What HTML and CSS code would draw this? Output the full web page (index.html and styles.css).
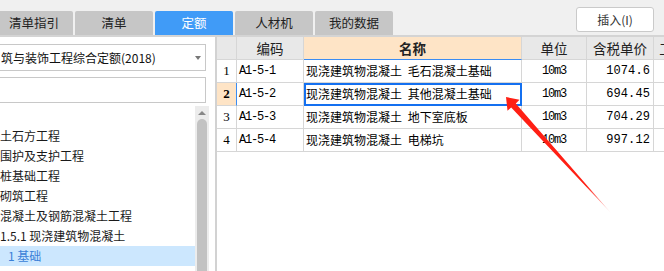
FILE: index.html
```html
<!DOCTYPE html>
<html lang="zh-CN">
<head>
<meta charset="UTF-8">
<title>定额</title>
<link rel="stylesheet" href="styles.css">
</head>
<body>

<div class="topbar">
  <div class="tabs">
    <div class="tab">清单指引</div>
    <div class="tab">清单</div>
    <div class="tab active">定额</div>
    <div class="tab">人材机</div>
    <div class="tab">我的数据</div>
  </div>
  <button class="insert">插入(I)</button>
</div>

<div class="main">
  <div class="side">
    <div class="select">筑与装饰工程综合定额(2018)<span class="caret"></span></div>
    <div class="search"></div>
    <div class="tree-wrap">
      <ul class="tree">
        <li>土石方工程</li>
        <li>围护及支护工程</li>
        <li>桩基础工程</li>
        <li>砌筑工程</li>
        <li>混凝土及钢筋混凝土工程</li>
        <li>1.5.1 现浇建筑物混凝土</li>
        <li class="sub selected">1 基础</li>
      </ul>
      <div class="scrollbar">
        <div class="sb-up"></div>
        <div class="sb-thumb"></div>
      </div>
    </div>
  </div>

  <div class="grid">
    <div class="row head">
      <div class="c num"></div>
      <div class="c code">编码</div>
      <div class="c name focus">名称</div>
      <div class="c unit">单位</div>
      <div class="c price">含税单价</div>
      <div class="c more">工程量</div>
    </div>
    <div class="row">
      <div class="c num">1</div>
      <div class="c code">A1-5-1</div>
      <div class="c name">现浇建筑物混凝土 毛石混凝土基础</div>
      <div class="c unit">10m3</div>
      <div class="c price">1074.6</div>
      <div class="c more"></div>
    </div>
    <div class="row current">
      <div class="c num">2</div>
      <div class="c code">A1-5-2</div>
      <div class="c name picked">现浇建筑物混凝土 其他混凝土基础</div>
      <div class="c unit">10m3</div>
      <div class="c price">694.45</div>
      <div class="c more"></div>
    </div>
    <div class="row">
      <div class="c num">3</div>
      <div class="c code">A1-5-3</div>
      <div class="c name">现浇建筑物混凝土 地下室底板</div>
      <div class="c unit">10m3</div>
      <div class="c price">704.29</div>
      <div class="c more"></div>
    </div>
    <div class="row">
      <div class="c num">4</div>
      <div class="c code">A1-5-4</div>
      <div class="c name">现浇建筑物混凝土 电梯坑</div>
      <div class="c unit">10m3</div>
      <div class="c price">997.12</div>
      <div class="c more"></div>
    </div>
  </div>
</div>

<!-- 标注箭头 -->
<svg class="arrow" width="664" height="271" viewBox="0 0 664 271">
  <defs>
    <linearGradient id="fade" gradientUnits="userSpaceOnUse" x1="512" y1="104" x2="611" y2="213">
      <stop offset="0" stop-color="#ff1f14"/>
      <stop offset="0.75" stop-color="#ff1f14"/>
      <stop offset="1" stop-color="#ff1f14" stop-opacity="0.1"/>
    </linearGradient>
  </defs>
  <polygon fill="url(#fade)" points="506,97 519.5,99.8 515.8,103.4 611,213 511.2,107.4 507.5,110.8"/>
</svg>

</body>
</html>
```

FILE: styles.css
```css
body {
    margin: 0;
    width: 664px;
    height: 271px;
    overflow: hidden;
    background: #f0f0f0;
    font-family: "Noto Sans CJK SC", "Noto Sans", sans-serif;
    color: #222;
}

.topbar {
    display: flex;
    justify-content: space-between;
    height: 35px;
    border-bottom: 2px solid #d4d4d4;
}
.tabs {
    display: flex;
    gap: 2px;
    margin-left: -5px;
    padding-top: 11px;
}
.tab {
    width: 78px;
    height: 24px;
    line-height: 24px;
    text-align: center;
    font-size: 12.5px;
    background: #c6c6c6;
    color: #222;
    border-radius: 2px 2px 0 0;
}
.tab.active { background: #409bf7; color: #fff; }

.insert {
    width: 78px;
    height: 25px;
    margin: 7px 10px 0 0;
    padding: 0;
    background: #fff;
    border: 1px solid #cacaca;
    border-radius: 3px;
    font-family: inherit;
    font-size: 12px;
    color: #333;
}

.main {
    display: flex;
    height: 234px;
}

.side {
    width: 215px;
    flex-shrink: 0;
    background: #fff;
    border-right: 2px solid #d2d2d2;
    overflow: hidden;
}
.select, .search {
    box-sizing: border-box;
    width: 226px;
    margin-left: -20px;
    border: 1px solid #c8c8c8;
    background: #fff;
}
.select {
    position: relative;
    height: 27px;
    margin-top: 7px;
    padding-left: 20px;
    line-height: 25px;
    font-size: 12px;
    color: #111;
    white-space: nowrap;
}
.caret {
    position: absolute;
    right: 4px;
    top: 11px;
    border-left: 3px solid transparent;
    border-right: 3px solid transparent;
    border-top: 4px solid #777;
}
.search {
    height: 26px;
    margin-top: 6px;
}

.tree-wrap { display: flex; }
.tree {
    list-style: none;
    margin: 0;
    padding: 23px 0 0;
    width: 195px;
    font-size: 12px;
    color: #1a1a1a;
}
.tree li {
    height: 20px;
    line-height: 20px;
    white-space: nowrap;
    overflow: hidden;
}
.tree li.sub { padding-left: 8px; }
.tree li.selected { background: #cce7fe; color: #3a7fd8; }

.scrollbar {
    width: 14px;
    margin-top: 3px;
    height: 200px;
    background: #ececec;
}
.sb-up {
    width: 0;
    margin: 5px auto 0;
    border-left: 4px solid transparent;
    border-right: 4px solid transparent;
    border-bottom: 4px solid #888;
}
.sb-thumb {
    width: 10px;
    height: 180px;
    margin: 4px auto 0;
    border-radius: 5px 5px 0 0;
    background: #c2c2c2;
}

.grid {
    flex: 1;
    background: #fff;
    overflow: hidden;
}
.row {
    display: flex;
    height: 23px;
}
.c {
    box-sizing: border-box;
    flex-shrink: 0;
    height: 23px;
    line-height: 22px;
    border-right: 1px solid #d6d6d6;
    border-bottom: 1px solid #d6d6d6;
    font-size: 12px;
    color: #000;
    white-space: nowrap;
    overflow: hidden;
}
.num { width: 20px; text-align: center; font-family: "Liberation Serif", serif; font-size: 13px; }
.code { width: 67px; padding-left: 2px; font-family: "Liberation Mono", monospace; font-size: 12px; letter-spacing: -1.2px; }
.name { width: 218px; padding-left: 2px; word-spacing: 3px; }
.unit { width: 65px; text-align: center; font-family: "Liberation Mono", monospace; font-size: 12px; letter-spacing: -1.2px; }
.price { width: 67px; text-align: right; padding-right: 3px; font-family: "Liberation Mono", monospace; font-size: 12px; letter-spacing: 0.1px; }
.more { width: 52px; }

.head .c {
    background: #e8e8e8;
    text-align: center;
    padding: 0;
    letter-spacing: 0;
    font-family: "Noto Sans CJK SC", sans-serif;
    font-size: 13.5px;
    color: #222;
}
.head .c.focus {
    background: #fee4c6;
    font-weight: bold;
    border-bottom-color: #3b8cf2;
}
.current .num {
    background: #fee4c6;
    font-weight: bold;
    border-right-color: #3b8cf2;
}
.picked {
    outline: 2px solid #1470f0;
    outline-offset: -2px;
}

.arrow {
    position: absolute;
    top: 0;
    left: 0;
    pointer-events: none;
}
```
